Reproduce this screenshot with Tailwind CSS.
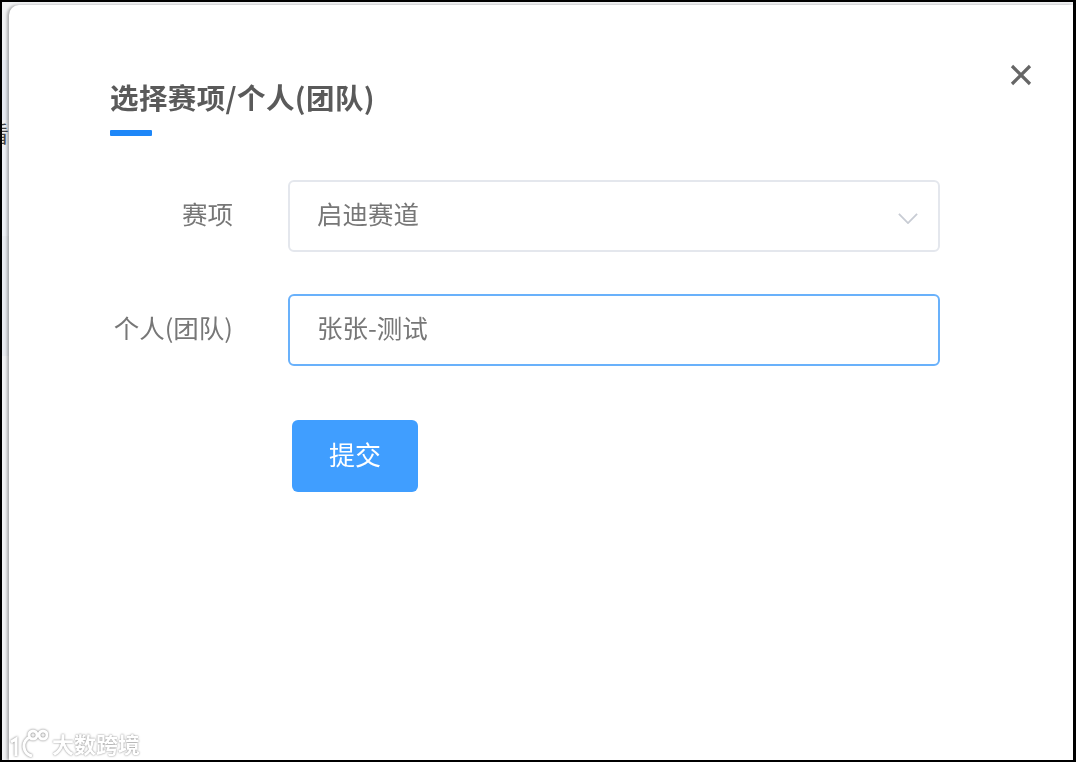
<!DOCTYPE html>
<html lang="zh-CN">
<head>
  <meta charset="UTF-8" />
  <title>选择赛项/个人(团队)</title>
  <script src="https://cdn.jsdelivr.net/npm/@tailwindcss/browser@4"></script>
</head>
<body class="m-0 overflow-hidden bg-white">
  <div class="w-[1076px] h-[762px] border-2 border-r-[3px] border-black bg-[#f1f2f4] flex overflow-hidden font-['Noto_Sans_CJK_SC','Noto_Sans',sans-serif]">
    <!-- page behind the dialog -->
    <div class="w-[7px] shrink-0 flex flex-col pt-[58px] overflow-hidden">
      <div class="h-[60px] bg-[#e6ebf3]"></div>
      <div class="text-[#444] text-[22px] leading-[24px] -ml-[15px] w-[30px] h-[26px] overflow-hidden">看</div>
      <div class="h-[90px] bg-[#eef1f6]"></div>
      <div class="h-[120px] bg-[#e9ecf1]"></div>
    </div>

    <!-- dialog -->
    <div class="relative flex-1 min-w-0 mt-[3px] bg-white rounded-tl-[10px] shadow-[-2px_0_3px_rgba(0,0,0,0.3)] pl-[101px] pt-[73px] blur-[0.6px]">
      <button class="absolute left-[1000px] top-[58px] w-6 h-6 text-[#666]">
        <svg viewBox="0 0 24 24" class="w-6 h-6" fill="none" stroke="currentColor" stroke-width="3.2"><path d="M3 3 L21 21 M21 3 L3 21"/></svg>
      </button>

      <h2 class="text-[28.5px] leading-[38px] font-bold text-[#5a5a5a] tracking-[0.4px]">选择赛项/个人(团队)</h2>
      <div class="mt-[14px] w-[42px] h-[6px] bg-[#1e87f8] rounded-[1px]"></div>

      <div class="mt-[44px] flex items-center h-[72px]">
        <label class="w-[123px] text-right text-[25.5px] text-[#777] pb-[5px]">赛项</label>
        <div class="ml-[55px] w-[652px] h-full border-2 border-[#e4e7ed] rounded-[6px] pl-[27px] pr-[20px] flex items-center justify-between">
          <span class="text-[25.5px] text-[#777] pb-[5px]">启迪赛道</span>
          <svg viewBox="0 0 22 12" class="w-[20px] h-[11px] mt-1" fill="none" stroke="#c8ccd4" stroke-width="2"><path d="M1 1 L11 11 L21 1"/></svg>
        </div>
      </div>

      <div class="mt-[42px] flex items-center h-[72px]">
        <label class="w-[123px] text-right text-[25.5px] text-[#777] whitespace-nowrap pb-[6px]">个人(团队)</label>
        <div class="ml-[55px] w-[652px] h-full border-2 border-[#69b1fb] rounded-[6px] pl-[27px] flex items-center">
          <span class="text-[25.5px] text-[#777] pb-[5px]">张张-测试</span>
        </div>
      </div>

      <div class="mt-[54px] ml-[182px]">
        <button class="w-[126px] h-[72px] rounded-[6px] bg-[#409eff] text-white text-[26px] pb-[6px]">提交</button>
      </div>

      <!-- watermark -->
      <div class="absolute left-[1px] bottom-[3px] flex items-end gap-[4px] text-white [text-shadow:0_0_2px_#777] pointer-events-none">
        <svg viewBox="0 0 38 28" class="w-[38px] h-[28px]" fill="none" stroke="#fff" stroke-width="3" style="filter:drop-shadow(0 0 1px #777)">
          <path d="M1 13 L6 10 V27"/><path d="M20 8 A10 10 0 0 0 22 27"/><circle cx="23" cy="6" r="4"/><circle cx="33" cy="6" r="4"/>
        </svg>
        <span class="text-[22px] leading-[28px] font-bold">大数跨境</span>
      </div>
    </div>
  </div>
</body>
</html>
